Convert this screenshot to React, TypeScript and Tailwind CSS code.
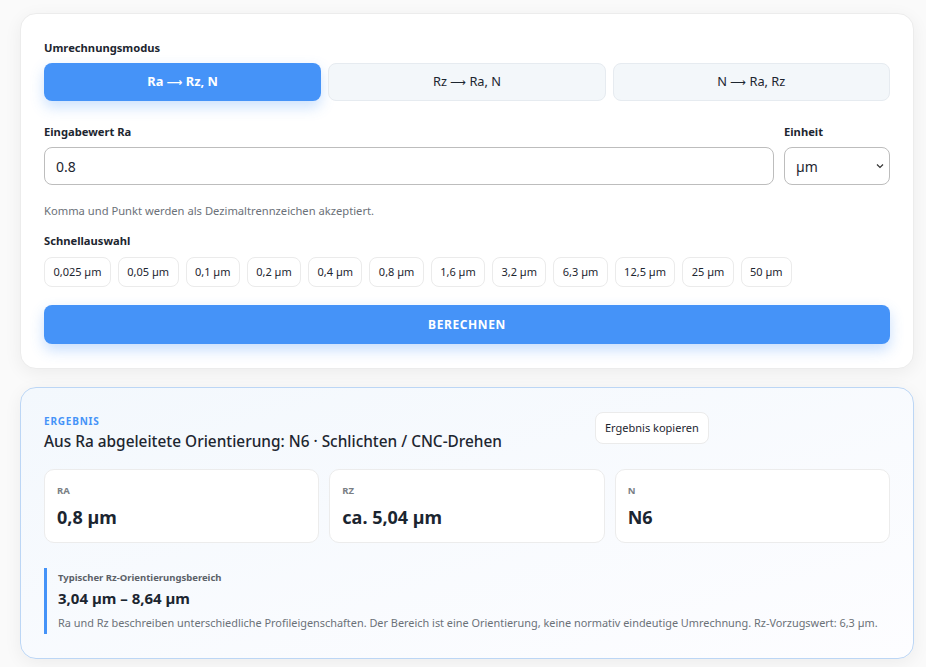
import React from "react";

const chips = ["0,025 µm","0,05 µm","0,1 µm","0,2 µm","0,4 µm","0,8 µm","1,6 µm","3,2 µm","6,3 µm","12,5 µm","25 µm","50 µm"];

const Arrow = () => <span className="text-[11px]" style={{ fontFamily: '"DejaVu Sans", sans-serif' }}>⟶</span>;

export default function App() {
  return (
    <div className="min-h-[667px] bg-[#fafafa] pl-[20px] pr-[12px] pt-[13px] pb-[8px] text-[#1b2530]" style={{ fontFamily: '"Noto Sans", "Open Sans", sans-serif' }}>
      <div className="rounded-[16px] border border-[#ececec] bg-white px-[23px] pt-[26px] pb-[24px] shadow-[0_4px_18px_rgba(0,0,0,0.06)]">
        <div className="text-[11.2px] font-bold leading-[16px] text-[#1d2630]">Umrechnungsmodus</div>
        <div className="mt-[7px] grid grid-cols-3 gap-[7px]">
          <button className="h-[38px] rounded-[8px] bg-[#4593f8] text-[12.8px] font-bold text-white shadow-[0_6px_14px_rgba(69,147,248,0.28)]">Ra <Arrow /> Rz, N</button>
          <button className="h-[38px] rounded-[8px] border border-[#e6ebf0] bg-[#f3f7fa] text-[12.8px] text-[#1d2630]">Rz <Arrow /> Ra, N</button>
          <button className="h-[38px] rounded-[8px] border border-[#e6ebf0] bg-[#f3f7fa] text-[12.8px] text-[#1d2630]">N <Arrow /> Ra, Rz</button>
        </div>
        <div className="mt-[23px] flex gap-[10px]">
          <div className="flex-1">
            <div className="text-[11.2px] font-bold leading-[16px] text-[#1d2630]">Eingabewert Ra</div>
            <div className="mt-[7px] flex h-[38px] items-center rounded-[8px] border border-[#bdbdbd] bg-white px-[11px] text-[14px] text-[#1d2630]">0.8</div>
          </div>
          <div className="w-[106px]">
            <div className="text-[11.2px] font-bold leading-[16px] text-[#1d2630]">Einheit</div>
            <div className="mt-[7px] flex h-[38px] items-center justify-between rounded-[8px] border border-[#bdbdbd] bg-white pl-[11px] pr-[5px] text-[14px] text-[#1d2630]">
              <span>µm</span>
              <svg width="8" height="6" viewBox="0 0 8 6"><path d="M1 1.5 L4 4.5 L7 1.5" stroke="#333" strokeWidth="1.2" fill="none" /></svg>
            </div>
          </div>
        </div>
        <div className="mt-[18px] text-[11.2px] leading-[16px] text-[#6b7178]">Komma und Punkt werden als Dezimaltrennzeichen akzeptiert.</div>
        <div className="mt-[14px] text-[11.2px] font-bold leading-[16px] text-[#1d2630]">Schnellauswahl</div>
        <div className="mt-[8px] flex flex-wrap gap-[7px]">
          {chips.map((c) => (
            <button key={c} className="h-[30px] rounded-[8px] border border-[#ebebeb] bg-white px-[8.4px] text-[11px] text-[#1d2630]">{c}</button>
          ))}
        </div>
        <button className="mt-[18px] h-[39px] w-full rounded-[8px] bg-[#4593f8] text-[12px] font-bold tracking-[0.05em] text-white shadow-[0_6px_14px_rgba(69,147,248,0.3)]">BERECHNEN</button>
      </div>

      <div className="mt-[18px] rounded-[16px] border border-[#bcd6f5] bg-gradient-to-br from-[#f3f8fd] to-[#fdfdff] px-[23px] pt-[26px] pb-[24px] shadow-[0_4px_18px_rgba(0,0,0,0.06)]">
        <div className="flex items-start gap-[16px]">
          <div className="w-[535px]">
            <div className="text-[10px] font-bold leading-[14px] tracking-[0.08em] text-[#4593f8]">ERGEBNIS</div>
            <div className="mt-[3px] text-[15.4px] font-medium leading-[22px] text-[#1d2630]">Aus Ra abgeleitete Orientierung: N6 · Schlichten / CNC-Drehen</div>
          </div>
          <button className="mt-[-2px] h-[32px] rounded-[8px] border border-[#ebebeb] bg-white px-[9px] text-[11px] text-[#1d2630]">Ergebnis kopieren</button>
        </div>
        <div className="mt-[16px] grid grid-cols-3 gap-[10px]">
          {[["RA","0,8 µm"],["RZ","ca. 5,04 µm"],["N","N6"]].map(([l,v]) => (
            <div key={l} className="h-[74px] rounded-[10px] border border-[#ececec] bg-white px-[12px] pt-[14px]">
              <div className="text-[9.5px] font-bold leading-[14px] text-[#7a7f85]">{l}</div>
              <div className="mt-[6px] text-[18px] font-bold leading-[26px] text-[#1b2530]">{v}</div>
            </div>
          ))}
        </div>
        <div className="mt-[25px] border-l-[3px] border-[#4593f8] pl-[11px] py-[3px]">
          <div className="text-[9.5px] font-bold leading-[14px] text-[#5c6168]">Typischer Rz-Orientierungsbereich</div>
          <div className="mt-[2px] text-[15px] font-bold leading-[22px] text-[#1b2530]">3,04 µm – 8,64 µm</div>
          <div className="mt-[5px] text-[10.9px] leading-[17px] text-[#6b7178]">Ra und Rz beschreiben unterschiedliche Profileigenschaften. Der Bereich ist eine Orientierung, keine normativ eindeutige Umrechnung. Rz-Vorzugswert: 6,3 µm.</div>
        </div>
      </div>
    </div>
  );
}
